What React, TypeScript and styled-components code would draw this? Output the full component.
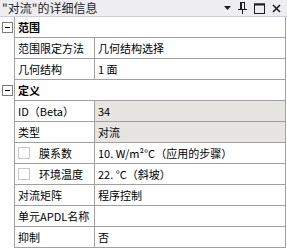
import React from "react";
import styled, { createGlobalStyle } from "styled-components";

const Global = createGlobalStyle`
  html, body { margin: 0; padding: 0; background: #ffffff; }
  body { font-family: "Noto Sans CJK SC", "Noto Sans", sans-serif; }
`;

const LINE = "#a0a0a0";
const FONT = `"Microsoft YaHei", "Noto Sans CJK SC", "Noto Sans", sans-serif`;

const Panel = styled.div`
  width: 287px;
  height: 252px;
  background: #ffffff;
  overflow: hidden;
  font-family: ${FONT};
  color: #000;
`;

const TitleBar = styled.div`
  height: 16px;
  border-bottom: 1px solid #cccedb;
  background: #eeeef2;
  display: flex;
  align-items: center;
  padding-left: 2px;
  padding-right: 6px;
  gap: 4px;
`;

const Title = styled.span`
  font-size: 12px;
  line-height: 16px;
  color: #1e1e1e;
  white-space: nowrap;
`;

const Grip = styled.div`
  flex: 1;
  height: 5px;
  margin-right: 2px;
  background-image: radial-gradient(circle, #999ca6 0.6px, transparent 0.7px);
  background-size: 4px 4px;
  background-position: 0 0;
  position: relative;
  &::after {
    content: "";
    position: absolute;
    inset: 0;
    background-image: radial-gradient(circle, #999ca6 0.6px, transparent 0.7px);
    background-size: 4px 4px;
    background-position: 2px 2px;
  }
`;

const Icons = styled.div`
  display: flex;
  align-items: center;
  gap: 7px;
`;

const Grid = styled.div`
  width: 286px;
  display: flex;
  flex-direction: column;
`;

const Row = styled.div`
  display: flex;
  height: 21px;
`;

const Gutter = styled.div`
  width: 14px;
  border-right: 1px solid ${LINE};
  display: flex;
  align-items: center;
  justify-content: center;
`;

const Content = styled.div`
  flex: 1;
  display: flex;
  border-bottom: 1px solid ${LINE};
  border-right: 1px solid ${LINE};
`;

const HeaderCell = styled.div`
  flex: 1;
  font-size: 11px;
  font-weight: bold;
  line-height: 20px;
  padding-left: 3px;
`;

const LabelCell = styled.div`
  width: 80px;
  border-right: 1px solid ${LINE};
  display: flex;
  align-items: center;
  padding-left: 3px;
  box-sizing: border-box;
  font-size: 11px;
  line-height: 20px;
  white-space: nowrap;
`;

const ValueCell = styled.div<{ $gray?: boolean }>`
  flex: 1;
  padding-left: 3px;
  font-size: 11px;
  line-height: 20px;
  white-space: nowrap;
  overflow: hidden;
  background: ${(p) => (p.$gray ? "#e6e5e2" : "#ffffff")};
`;

const Check = styled.span`
  width: 10px;
  height: 10px;
  border: 1px solid #c8c8c8;
  background: #fff;
  margin-right: 9px;
  flex-shrink: 0;
`;

const Expander = () => (
  <svg width="11" height="11" viewBox="0 0 11 11">
    <rect x="0.5" y="0.5" width="10" height="10" fill="#fff" stroke="#7a7a7a" />
    <line x1="3" y1="5.5" x2="8" y2="5.5" stroke="#000" />
  </svg>
);

const DropIcon = () => (
  <svg width="7" height="4" viewBox="0 0 7 4">
    <polygon points="0,0 7,0 3.5,4" fill="#1e1e1e" />
  </svg>
);

const PinIcon = () => (
  <svg width="9" height="12" viewBox="0 0 9 12">
    <line x1="2" y1="0.5" x2="7" y2="0.5" stroke="#1e1e1e" />
    <rect x="2" y="0" width="2" height="7" fill="#1e1e1e" />
    <line x1="6.5" y1="0" x2="6.5" y2="7" stroke="#1e1e1e" />
    <line x1="0" y1="7.5" x2="9" y2="7.5" stroke="#1e1e1e" />
    <line x1="4.5" y1="8" x2="4.5" y2="12" stroke="#1e1e1e" />
  </svg>
);

const MaxIcon = () => (
  <svg width="11" height="11" viewBox="0 0 11 11">
    <rect x="0.5" y="1" width="10" height="9.5" fill="none" stroke="#1e1e1e" />
    <line x1="0" y1="1.5" x2="11" y2="1.5" stroke="#1e1e1e" strokeWidth="2" />
  </svg>
);

const CloseIcon = () => (
  <svg width="9" height="9" viewBox="0 0 9 9">
    <path d="M1 1 L8 8 M8 1 L1 8" stroke="#1e1e1e" strokeWidth="1.6" />
  </svg>
);

type Item = { label: string; value: string; gray?: boolean; check?: boolean };

const groups: { title: string; items: Item[] }[] = [
  {
    title: "范围",
    items: [
      { label: "范围限定方法", value: "几何结构选择" },
      { label: "几何结构", value: "1 面" },
    ],
  },
  {
    title: "定义",
    items: [
      { label: "ID（Beta）", value: "34", gray: true },
      { label: "类型", value: "对流", gray: true },
      { label: "膜系数", value: "10. W/m²°C（应用的步骤）", check: true },
      { label: "环境温度", value: "22. °C（斜坡）", check: true },
      { label: "对流矩阵", value: "程序控制" },
      { label: "单元APDL名称", value: "" },
      { label: "抑制", value: "否" },
    ],
  },
];

export default function App() {
  return (
    <>
      <Global />
      <Panel>
        <TitleBar>
          <Title>"对流"的详细信息</Title>
          <Grip />
          <Icons>
            <DropIcon />
            <PinIcon />
            <MaxIcon />
            <CloseIcon />
          </Icons>
        </TitleBar>
        <Grid>
          {groups.map((g) => (
            <React.Fragment key={g.title}>
              <Row>
                <Gutter>
                  <Expander />
                </Gutter>
                <Content>
                  <HeaderCell>{g.title}</HeaderCell>
                </Content>
              </Row>
              {g.items.map((it) => (
                <Row key={it.label}>
                  <Gutter />
                  <Content>
                    <LabelCell>
                      {it.check && <Check />}
                      {it.label}
                    </LabelCell>
                    <ValueCell $gray={it.gray}>{it.value}</ValueCell>
                  </Content>
                </Row>
              ))}
            </React.Fragment>
          ))}
        </Grid>
      </Panel>
    </>
  );
}
